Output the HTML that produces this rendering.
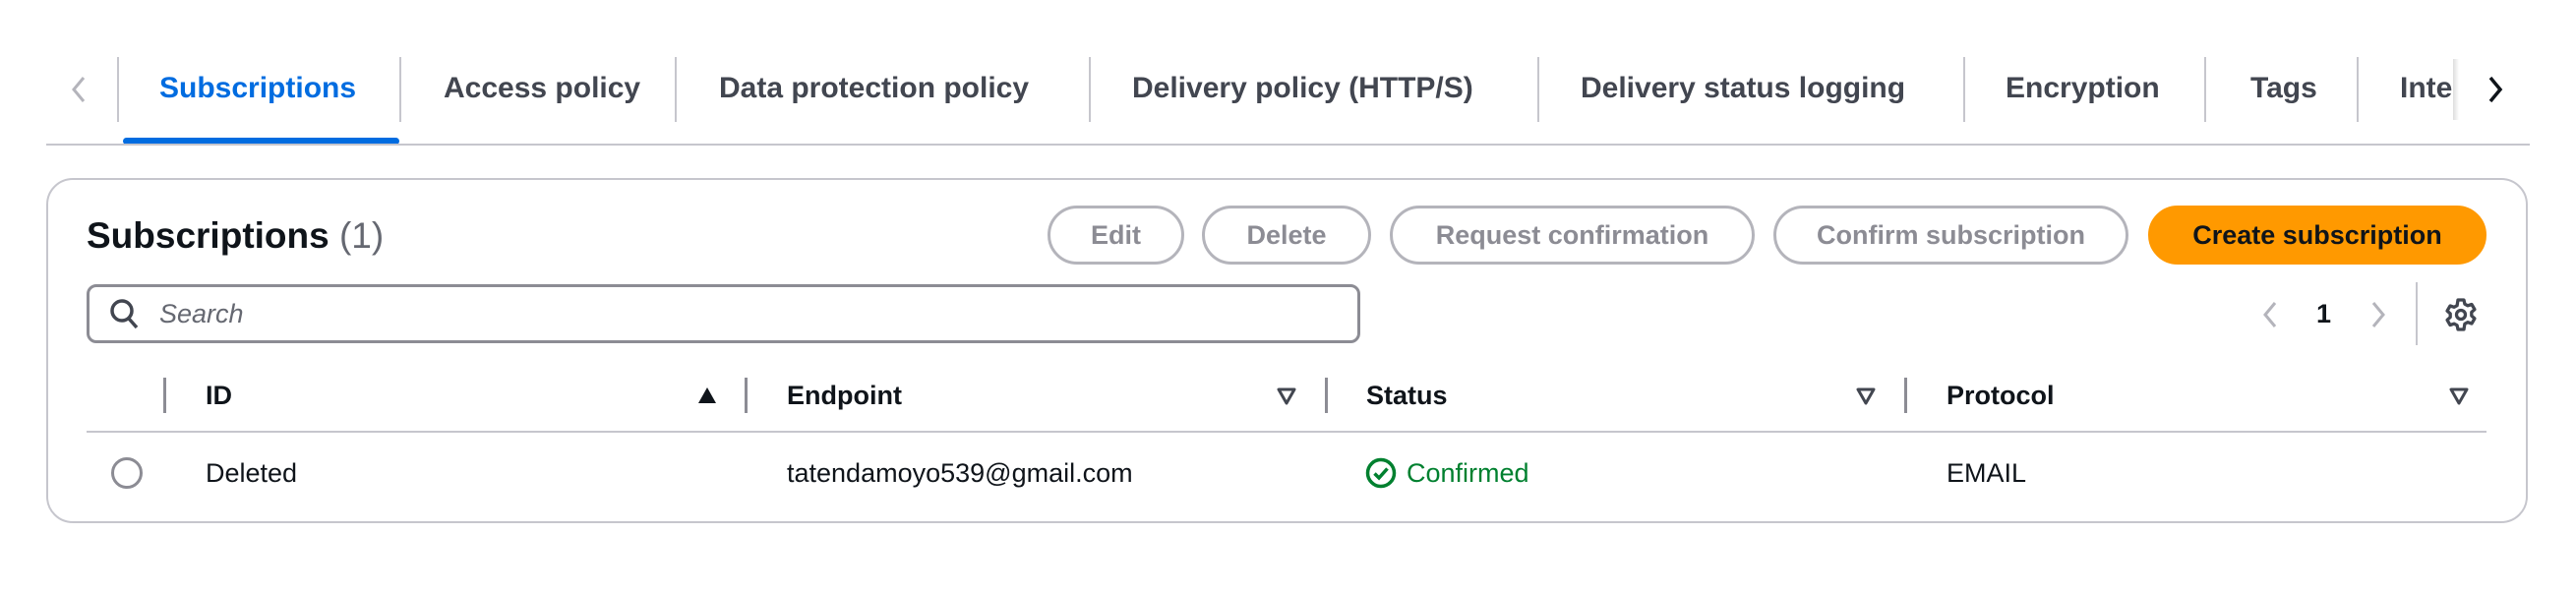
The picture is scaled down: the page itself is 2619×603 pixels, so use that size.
<!DOCTYPE html>
<html><head><meta charset="utf-8"><style>
*{margin:0;padding:0;box-sizing:border-box}
body{width:2619px;height:603px;background:#fff;font-family:"Liberation Sans",sans-serif;position:relative;overflow:hidden;color:#0f141a}
.a{position:absolute;white-space:nowrap}
.tab{position:absolute;top:72px;font-size:30px;font-weight:bold;color:#424650;line-height:36px}
.sep{position:absolute;top:58px;width:2px;height:66px;background:#c6c6cd}
.btn{position:absolute;top:209px;height:60px;border:3px solid #b4b4bb;border-radius:30px;font-size:27px;font-weight:bold;color:#8c8c94;display:flex;align-items:center;justify-content:center}
.hs{position:absolute;top:384px;width:3px;height:36px;background:#8c8c94}
.h{position:absolute;top:386px;font-size:27px;font-weight:bold;line-height:32px}
.d{position:absolute;top:465px;font-size:27px;line-height:32px}
</style></head><body>
<svg class="a" style="left:70px;top:76px" width="20" height="30" viewBox="0 0 20 30"><path d="M15 3 L5 15 L15 27" fill="none" stroke="#b4b4bb" stroke-width="3"/></svg>
<div class="sep" style="left:119px"></div>
<div class="tab" style="left:162px;color:#006ce0">Subscriptions</div>
<div class="a" style="left:125px;top:140px;width:281px;height:7px;background:#006ce0;border-radius:4px"></div>
<div class="sep" style="left:406px"></div>
<div class="tab" style="left:451px">Access policy</div>
<div class="sep" style="left:686px"></div>
<div class="tab" style="left:731px">Data protection policy</div>
<div class="sep" style="left:1107px"></div>
<div class="tab" style="left:1151px">Delivery policy (HTTP/S)</div>
<div class="sep" style="left:1563px"></div>
<div class="tab" style="left:1607px">Delivery status logging</div>
<div class="sep" style="left:1996px"></div>
<div class="tab" style="left:2039px">Encryption</div>
<div class="sep" style="left:2241px"></div>
<div class="tab" style="left:2288px">Tags</div>
<div class="sep" style="left:2396px"></div>
<div class="tab" style="left:2440px;width:56px;overflow:hidden">Inte</div>
<div class="a" style="left:2494px;top:60px;width:6px;height:62px;background:linear-gradient(90deg,#ddd,#fff)"></div>
<svg class="a" style="left:2527px;top:76px" width="20" height="30" viewBox="0 0 20 30"><path d="M5 3 L15 15 L5 27" fill="none" stroke="#0f141a" stroke-width="3.5"/></svg>
<div class="a" style="left:47px;top:146px;width:2525px;height:2px;background:#c6c6cd"></div>

<div class="a" style="left:47px;top:181px;width:2523px;height:351px;border:2px solid #c6c6cd;border-radius:27px"></div>
<div class="a" style="left:88px;top:218px;font-size:37px;font-weight:bold;line-height:44px">Subscriptions <span style="font-weight:normal;color:#656871">(1)</span></div>
<div class="btn" style="left:1065px;width:139px">Edit</div>
<div class="btn" style="left:1222px;width:172px">Delete</div>
<div class="btn" style="left:1413px;width:371px">Request confirmation</div>
<div class="btn" style="left:1803px;width:361px">Confirm subscription</div>
<div class="btn" style="left:2184px;width:344px;background:#ff9900;border-color:#ff9900;color:#0f141a">Create subscription</div>

<div class="a" style="left:88px;top:289px;width:1295px;height:60px;border:3px solid #8c8c94;border-radius:10px"></div>
<svg class="a" style="left:111px;top:303px" width="32" height="34" viewBox="0 0 32 34"><circle cx="13" cy="13" r="10" fill="none" stroke="#424650" stroke-width="3.5"/><path d="M20 21 L28 30" stroke="#424650" stroke-width="3.5"/></svg>
<div class="a" style="left:162px;top:303px;font-size:27px;font-style:italic;color:#656871;line-height:32px">Search</div>

<svg class="a" style="left:2298px;top:304px" width="20" height="32" viewBox="0 0 20 32"><path d="M15 4 L5 16 L15 28" fill="none" stroke="#b4b4bb" stroke-width="3"/></svg>
<div class="a" style="left:2355px;top:303px;font-size:27px;font-weight:bold;line-height:32px">1</div>
<svg class="a" style="left:2408px;top:304px" width="20" height="32" viewBox="0 0 20 32"><path d="M5 4 L15 16 L5 28" fill="none" stroke="#b4b4bb" stroke-width="3"/></svg>
<div class="a" style="left:2456px;top:287px;width:2px;height:64px;background:#c6c6cd"></div>
<svg class="a" style="left:2484px;top:302px" width="36" height="36" viewBox="0 0 24 24"><path d="M10 2h4l.6 2.8 2 1.1 2.7-.9 2 3.4-2.1 1.9v2.4l2.1 1.9-2 3.4-2.7-.9-2 1.1L14 22h-4l-.6-2.8-2-1.1-2.7.9-2-3.4 2.1-1.9V11.3L2.7 9.4l2-3.4 2.7.9 2-1.1z" fill="none" stroke="#424650" stroke-width="2.2" stroke-linejoin="round"/><circle cx="12" cy="12" r="3" fill="none" stroke="#424650" stroke-width="2.2"/></svg>

<div class="hs" style="left:166px"></div>
<div class="h" style="left:209px">ID</div>
<svg class="a" style="left:709px;top:393px" width="20" height="18" viewBox="0 0 20 18"><path d="M10 1 L19 17 L1 17Z" fill="#0f141a"/></svg>
<div class="hs" style="left:757px"></div>
<div class="h" style="left:800px">Endpoint</div>
<svg class="a" style="left:1298px;top:394px" width="20" height="18" viewBox="0 0 20 18"><path d="M2 2 L18 2 L10 16Z" fill="none" stroke="#424650" stroke-width="3" stroke-linejoin="round"/></svg>
<div class="hs" style="left:1347px"></div>
<div class="h" style="left:1389px">Status</div>
<svg class="a" style="left:1887px;top:394px" width="20" height="18" viewBox="0 0 20 18"><path d="M2 2 L18 2 L10 16Z" fill="none" stroke="#424650" stroke-width="3" stroke-linejoin="round"/></svg>
<div class="hs" style="left:1936px"></div>
<div class="h" style="left:1979px">Protocol</div>
<svg class="a" style="left:2490px;top:394px" width="20" height="18" viewBox="0 0 20 18"><path d="M2 2 L18 2 L10 16Z" fill="none" stroke="#424650" stroke-width="3" stroke-linejoin="round"/></svg>
<div class="a" style="left:88px;top:438px;width:2440px;height:2px;background:#c6c6cd"></div>

<div class="a" style="left:113px;top:465px;width:32px;height:32px;border:3px solid #8c8c94;border-radius:50%"></div>
<div class="d" style="left:209px">Deleted</div>
<div class="d" style="left:800px">tatendamoyo539@gmail.com</div>
<svg class="a" style="left:1388px;top:465px" width="32" height="32" viewBox="0 0 32 32"><circle cx="16" cy="16" r="13.5" fill="none" stroke="#00802f" stroke-width="3.5"/><path d="M9.5 16.5 L14 21 L22.5 11.5" fill="none" stroke="#00802f" stroke-width="3.5"/></svg>
<div class="d" style="left:1430px;color:#00802f">Confirmed</div>
<div class="d" style="left:1979px">EMAIL</div>
</body></html>
